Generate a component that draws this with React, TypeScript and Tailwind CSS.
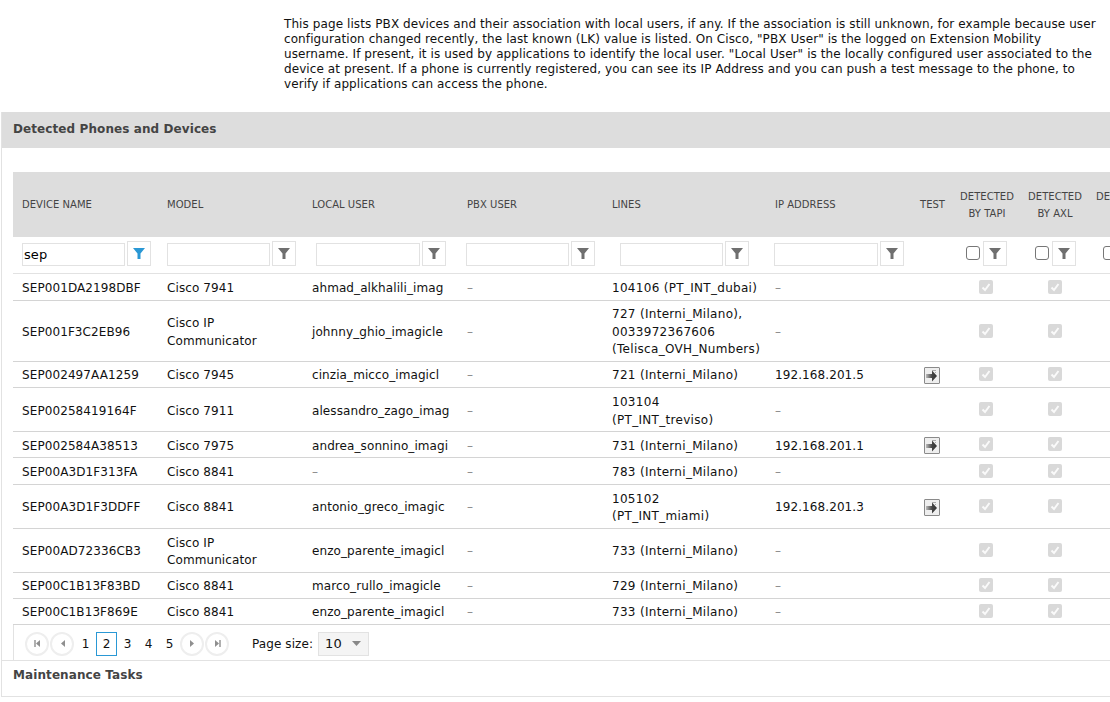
import React from "react";

type Row = {
  name: string;
  model: string[];
  user: string;
  lines: string[];
  ip: string;
  h: string;
  pt: string;
};

const rows: Row[] = [
  { name: "SEP001DA2198DBF", model: ["Cisco 7941"], user: "ahmad_alkhalili_imag", lines: ["104106 (PT_INT_dubai)"], ip: "–", h: "h-[27px]", pt: "pt-[4px]" },
  { name: "SEP001F3C2EB96", model: ["Cisco IP", "Communicator"], user: "johnny_ghio_imagicle", lines: ["727 (Interni_Milano),", "0033972367606", "(Telisca_OVH_Numbers)"], ip: "–", h: "h-[61px]", pt: "pt-[4px]" },
  { name: "SEP002497AA1259", model: ["Cisco 7945"], user: "cinzia_micco_imagicl", lines: ["721 (Interni_Milano)"], ip: "192.168.201.5", h: "h-[26px]", pt: "pt-[4px]" },
  { name: "SEP00258419164F", model: ["Cisco 7911"], user: "alessandro_zago_imag", lines: ["103104", "(PT_INT_treviso)"], ip: "–", h: "h-[44px]", pt: "pt-[5px]" },
  { name: "SEP002584A38513", model: ["Cisco 7975"], user: "andrea_sonnino_imagi", lines: ["731 (Interni_Milano)"], ip: "192.168.201.1", h: "h-[26px]", pt: "pt-[6px]" },
  { name: "SEP00A3D1F313FA", model: ["Cisco 8841"], user: "–", lines: ["783 (Interni_Milano)"], ip: "–", h: "h-[27px]", pt: "pt-[4px]" },
  { name: "SEP00A3D1F3DDFF", model: ["Cisco 8841"], user: "antonio_greco_imagic", lines: ["105102", "(PT_INT_miami)"], ip: "192.168.201.3", h: "h-[44px]", pt: "pt-[4px]" },
  { name: "SEP00AD72336CB3", model: ["Cisco IP", "Communicator"], user: "enzo_parente_imagicl", lines: ["733 (Interni_Milano)"], ip: "–", h: "h-[44px]", pt: "pt-[4px]" },
  { name: "SEP00C1B13F83BD", model: ["Cisco 8841"], user: "marco_rullo_imagicle", lines: ["729 (Interni_Milano)"], ip: "–", h: "h-[26px]", pt: "pt-[4px]" },
  { name: "SEP00C1B13F869E", model: ["Cisco 8841"], user: "enzo_parente_imagicl", lines: ["733 (Interni_Milano)"], ip: "–", h: "h-[26px]", pt: "pt-[4px]" },
];

const widths = ["w-[145px]", "w-[145px]", "w-[155px]", "w-[145px]", "w-[163px]", "w-[145px]", "w-[42px]", "w-[68px]", "w-[68px]", "w-[68px]"];

function Funnel({ active }: { active?: boolean }) {
  return (
    <svg width="12" height="12" viewBox="0 0 12 12">
      <path d="M0 1h12L7.5 6.5V12h-3V6.5z" fill={active ? "#2a98d5" : "#6f6f6f"} />
    </svg>
  );
}

function FilterButton({ active }: { active?: boolean }) {
  return (
    <span className="flex h-[25px] w-[24px] shrink-0 items-center justify-center border border-[#e2e2e2]">
      <Funnel active={active} />
    </span>
  );
}

function TextFilter({ value, ml, wide }: { value?: string; ml: string; wide?: boolean }) {
  return (
    <div className={`flex items-end gap-[2px] ${ml}`}>
      <input
        readOnly
        value={value ?? ""}
        className={`h-[23px] border border-[#e2e2e2] bg-white px-[1px] text-[13px] text-black outline-none ${wide ? "w-[104px]" : "w-[103px]"}`}
      />
      <FilterButton active={!!value} />
    </div>
  );
}

function CheckFilter({ ml }: { ml: string }) {
  return (
    <div className={`flex items-center gap-[3px] ${ml}`}>
      <span className="h-[14px] w-[14px] shrink-0 rounded-[3px] border border-[#777] bg-white" />
      <FilterButton />
    </div>
  );
}

function DisabledCheck({ nudge }: { nudge?: boolean }) {
  return (
    <span className={`flex h-[14px] w-[14px] items-center justify-center rounded-[2px] bg-[#d9d9d9] ${nudge ? "ml-[26px]" : "mx-auto"}`}>
      <svg width="10" height="10" viewBox="0 0 10 10">
        <path d="M1.5 5.5L4 8l4.5-6" fill="none" stroke="#fafafa" strokeWidth="2" />
      </svg>
    </span>
  );
}

function TestButton() {
  return (
    <span className="flex h-[17px] w-[16px] items-center justify-center rounded-[1px] border border-[#8a8a8a] bg-[#eeeeee]">
      <svg width="14" height="14" viewBox="0 0 14 14">
        <defs>
          <linearGradient id="testArrow" x1="0" x2="1" y1="0" y2="0">
            <stop offset="0" stopColor="#bbb" />
            <stop offset="0.55" stopColor="#444" />
            <stop offset="1" stopColor="#333" />
          </linearGradient>
        </defs>
        <path d="M1 5h6V1.5L12 7 7 12.5V9H1z" fill="url(#testArrow)" />
        <path d="M7 1.5h4M10 3.5h1" stroke="#aaa" />
      </svg>
    </span>
  );
}

function PagerButton({ kind }: { kind: "first" | "prev" | "next" | "last" }) {
  const left = kind === "first" || kind === "prev";
  const bar = kind === "first" || kind === "last";
  return (
    <span className="flex h-[24px] w-[24px] items-center justify-center rounded-full border-2 border-[#eeeeee]">
      <svg width="9" height="9" viewBox="0 0 9 9">
        <path d={left ? "M7 1v7L3 4.5z" : "M2 1v7l4-3.5z"} fill="#8f8f8f" />
        {bar && <path d={left ? "M2 1v7" : "M7 1v7"} stroke="#8f8f8f" strokeWidth="1.4" />}
      </svg>
    </span>
  );
}

export default function App() {
  return (
    <div className="h-[702px] w-[1110px] overflow-hidden bg-white font-['DejaVu_Sans',sans-serif] text-[12px] tracking-[0.09px] text-[#111]">
      <p className="ml-[284px] h-[112px] w-[830px] whitespace-nowrap pt-[16.5px] leading-[15.2px]">
        This page lists PBX devices and their association with local users, if any. If the association is still unknown, for example because user
        <br />
        configuration changed recently, the last known (LK) value is listed. On Cisco, "PBX User" is the logged on Extension Mobility
        <br />
        username. If present, it is used by applications to identify the local user. "Local User" is the locally configured user associated to the
        <br />
        device at present. If a phone is currently registered, you can see its IP Address and you can push a test message to the phone, to
        <br />
        verify if applications can access the phone.
      </p>

      <section className="ml-[1px] border-l border-[#e2e2e2]">
        <h2 className="flex h-[36px] items-center bg-[#dddddd] pb-[2px] pl-[11px] text-[12px] font-bold text-[#444]">
          Detected Phones and Devices
        </h2>

        <div className="pl-[11px] pt-[24px]">
          <table className="w-[1144px] table-fixed border-collapse">
            <colgroup>
              {widths.map((w, i) => (
                <col key={i} className={w} />
              ))}
            </colgroup>
            <thead>
              <tr className="h-[65px] bg-[#dddddd] text-[10px] font-normal tracking-[0.03px] text-[#444]">
                {["DEVICE NAME", "MODEL", "LOCAL USER", "PBX USER", "LINES", "IP ADDRESS"].map((t) => (
                  <th key={t} className="pl-[9px] text-left font-normal">
                    {t}
                  </th>
                ))}
                <th className="pl-[9px] text-left font-normal">TEST</th>
                {[["DETECTED", "BY TAPI"], ["DETECTED", "BY AXL"], ["DETECTED", "BY"]].map((t, i) => (
                  <th key={i} className="pt-[1px] text-center font-normal leading-[17px] whitespace-nowrap">
                    {t[0]}
                    <br />
                    {t[1]}
                  </th>
                ))}
              </tr>
              <tr className="h-[36px] border-b border-[#e2e2e2]">
                <th className="pb-[3px] font-normal"><TextFilter value="sep" ml="ml-[9px]" /></th>
                <th className="pb-[3px] font-normal"><TextFilter ml="ml-[9px]" /></th>
                <th className="pb-[3px] font-normal"><TextFilter ml="ml-[13px]" wide /></th>
                <th className="pb-[3px] font-normal"><TextFilter ml="ml-[8px]" /></th>
                <th className="pb-[3px] font-normal"><TextFilter ml="ml-[17px]" /></th>
                <th className="pb-[3px] font-normal"><TextFilter ml="ml-[8px]" wide /></th>
                <th />
                <th className="pb-[3px] font-normal"><CheckFilter ml="ml-[13px]" /></th>
                <th className="pb-[3px] font-normal"><CheckFilter ml="ml-[14px]" /></th>
                <th className="pb-[3px] font-normal"><CheckFilter ml="ml-[14px]" /></th>
              </tr>
            </thead>
            <tbody>
              {rows.map((r) => (
                <tr key={r.name} className={`${r.h} border-b border-[#d4d4d4] leading-[17.5px]`}>
                  <td className={`pl-[9px] whitespace-nowrap ${r.pt}`}>{r.name}</td>
                  <td className={`pl-[9px] ${r.pt}`}>
                    {r.model.map((m) => (
                      <div key={m}>{m}</div>
                    ))}
                  </td>
                  <td className={`overflow-hidden pl-[9px] whitespace-nowrap ${r.pt} ${r.user === "–" ? "text-[#888]" : ""}`}>{r.user}</td>
                  <td className={`pl-[9px] text-[#888] ${r.pt}`}>–</td>
                  <td className={`pl-[9px] tracking-[0.3px] whitespace-nowrap ${r.pt}`}>
                    {r.lines.map((l) => (
                      <div key={l}>{l}</div>
                    ))}
                  </td>
                  <td className={`pl-[9px] whitespace-nowrap ${r.pt} ${r.ip === "–" ? "text-[#888]" : ""}`}>{r.ip}</td>
                  <td className="pl-[13px] pt-[3px]">{r.ip !== "–" && <TestButton />}</td>
                  <td><DisabledCheck nudge /></td>
                  <td><DisabledCheck /></td>
                  <td />
                </tr>
              ))}
            </tbody>
          </table>

          <div className="flex h-[35px] items-center border-l border-[#e2e2e2] pl-[11px] pt-[3px]">
            <div className="flex items-center gap-[1px]">
              <PagerButton kind="first" />
              <PagerButton kind="prev" />
            </div>
            <div className="ml-[1px] flex items-center">
              <span className="flex h-[24px] w-[21px] items-center justify-center">1</span>
              <span className="flex h-[24px] w-[21px] items-center justify-center border border-[#2a98d5]">2</span>
              <span className="flex h-[24px] w-[21px] items-center justify-center">3</span>
              <span className="flex h-[24px] w-[21px] items-center justify-center">4</span>
              <span className="flex h-[24px] w-[21px] items-center justify-center">5</span>
            </div>
            <div className="flex items-center gap-[1px]">
              <PagerButton kind="next" />
              <PagerButton kind="last" />
            </div>
            <span className="ml-[23px]">Page size:</span>
            <span className="ml-[5px] flex h-[24px] w-[51px] items-center justify-between border border-[#e2e2e2] bg-[#f4f4f4] pl-[6px] pr-[7px] text-[13px]">
              10
              <svg width="9" height="5" viewBox="0 0 9 5">
                <path d="M0 0h9L4.5 5z" fill="#888" />
              </svg>
            </span>
          </div>
        </div>

        <div className="h-[37px] border-y border-[#e2e2e2] pl-[11px] pt-[5px] text-[12px] font-bold text-[#444]">
          Maintenance Tasks
        </div>
      </section>
    </div>
  );
}
